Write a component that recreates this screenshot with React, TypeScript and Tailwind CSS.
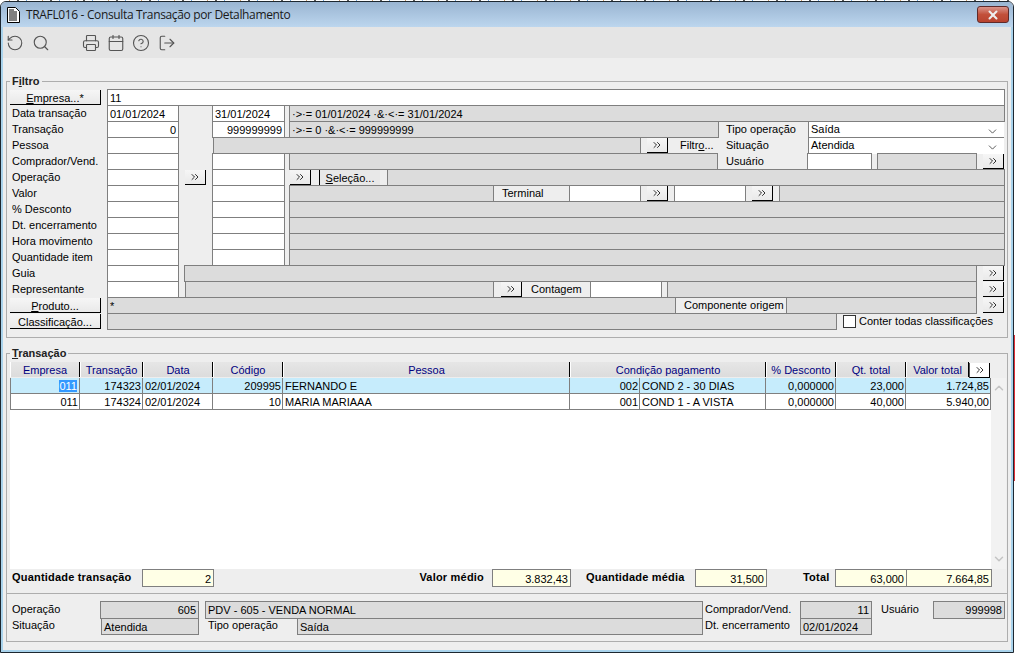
import { ReactNode } from 'react'
import {
  Calendar,
  ChevronDown,
  ChevronsRight,
  ChevronUp,
  CircleHelp,
  LogOut,
  Printer,
  RotateCcw,
  Search,
  X,
} from 'lucide-react'

function Input({
  className = '',
  children,
}: {
  className?: string
  children?: ReactNode
}) {
  return (
    <div
      className={`box-border h-[17px] shrink-0 overflow-hidden border border-[#7f7f7f] bg-white px-[2px] leading-[17px] ${className}`}
    >
      {children}
    </div>
  )
}

function Gray({
  className = '',
  children,
}: {
  className?: string
  children?: ReactNode
}) {
  return (
    <div
      className={`box-border h-[17px] shrink-0 overflow-hidden border border-[#7f7f7f] bg-[#dcdcdc] px-[2px] leading-[17px] ${className}`}
    >
      {children}
    </div>
  )
}

function Btn({
  className = '',
  children,
}: {
  className?: string
  children: ReactNode
}) {
  return (
    <div
      className={`mt-px box-border flex h-[15px] shrink-0 items-center justify-center border-r border-b border-black bg-gradient-to-b from-[#f6f6f6] to-[#e9e9e9] leading-none ${className}`}
    >
      {children}
    </div>
  )
}

function More({ className = '' }: { className?: string }) {
  return (
    <Btn className={`w-[21px] ${className}`}>
      <ChevronsRight size={12} strokeWidth={1.6} className="text-black" />
    </Btn>
  )
}

function Tag({
  className = '',
  children,
}: {
  className?: string
  children: ReactNode
}) {
  return (
    <div className={`h-4 shrink-0 leading-[17px] ${className}`}>{children}</div>
  )
}

function Row({ children }: { children: ReactNode }) {
  return <div className="flex h-4 pl-[3px]">{children}</div>
}

function Select({ value }: { value: string }) {
  return (
    <div className="ml-0 box-border flex h-[17px] w-[196px] shrink-0 items-center justify-between border-t border-l border-[#7f7f7f] bg-white pr-[5px] pl-[2px] leading-[13px]">
      <span className="-mt-[2px]">{value}</span>
      <ChevronDown size={13} strokeWidth={1.6} className="mt-[3px] text-[#444]" />
    </div>
  )
}

function Legend({ children }: { children: ReactNode }) {
  return (
    <div className="-mt-[8px] ml-[3px] h-[15px] w-fit bg-[#eeeeee] px-[2px] leading-[15px] font-bold text-[#222]">
      {children}
    </div>
  )
}

const headers = [
  { label: 'Empresa', width: 'w-[70px]' },
  { label: 'Transação', width: 'w-[63px]' },
  { label: 'Data', width: 'w-[70px]' },
  { label: 'Código', width: 'w-[70px]' },
  { label: 'Pessoa', width: 'w-[287px]' },
  { label: 'Condição pagamento', width: 'w-[196px]' },
  { label: '% Desconto', width: 'w-[70px]' },
  { label: 'Qt. total', width: 'w-[70px]' },
  { label: 'Valor total', width: 'w-[63px]' },
]

const columns = [
  'w-[70px] border-l text-right pr-[1px]',
  'w-[63px] text-right pr-[1px]',
  'w-[70px]',
  'w-[70px] text-right pr-[1px]',
  'w-[287px]',
  'w-[70px] text-right pr-[1px]',
  'w-[126px]',
  'w-[70px] text-right pr-[1px]',
  'w-[70px] text-right pr-[1px]',
  'w-[85px] text-right pr-[1px]',
]

const rows = [
  ['011', '174323', '02/01/2024', '209995', 'FERNANDO E', '002', 'COND 2 - 30 DIAS', '0,000000', '23,000', '1.724,85'],
  ['011', '174324', '02/01/2024', '10', 'MARIA MARIAAA', '001', 'COND 1 - A VISTA', '0,000000', '40,000', '5.940,00'],
]

const plainRows = ['% Desconto', 'Dt. encerramento', 'Hora movimento', 'Quantidade item']

export default function App() {
  return (
    <div className="flex h-[653px] w-[1015px] overflow-hidden bg-white bg-[repeating-linear-gradient(90deg,#ffffff_0_9px,#c89a6a_9px_10px,#ffffff_10px_17px,#555555_17px_19px,#ffffff_19px_26px,#6aa0d8_26px_27px,#ffffff_27px_33px)] bg-[length:100%_1px] bg-no-repeat font-['Liberation_Sans',Arial,sans-serif] text-[11px] text-black">
      <div className="mt-px box-border flex h-[652px] w-[1014px] shrink-0 flex-col overflow-hidden rounded-t-[6px] border border-[#1d2730]">
        <div className="flex h-[25px] shrink-0 items-center bg-gradient-to-b from-[#9ab5d2] to-[#bcd6ee] pr-[4px] pl-[6px]">
          <svg width="13" height="16" viewBox="0 0 13 16" className="shrink-0">
            <path d="M.5.5h8l4 4v11H.5z" fill="#fff" stroke="#000" />
            <path d="M2 3h5M2 5h8M2 7h8M2 9h8M2 11h8M2 13h8" stroke="#000" strokeWidth="1" />
          </svg>
          <span className="ml-[6px] font-['Open_Sans',sans-serif] text-[12px] tracking-[-0.35px] text-[#1a1a1a]">
            TRAFL016 - Consulta Transação por Detalhamento
          </span>
          <div className="ml-auto flex h-[17px] w-[32px] items-center justify-center rounded-[3px] border border-[#5f2a2a] bg-gradient-to-b from-[#d9938a] via-[#c2503a] to-[#b8432f]">
            <X size={14} strokeWidth={3.5} className="text-[#eeeeee]" />
          </div>
        </div>

        <div className="flex min-h-0 flex-1 flex-col border-x-2 border-b-2 border-[#a9d3ec] bg-[#eeeeee]">
          <div className="flex h-[31px] shrink-0 items-center bg-[#e5e5e5] pl-[3px] text-[#555]">
            <RotateCcw size={18} strokeWidth={1.5} />
            <Search size={18} strokeWidth={1.5} className="ml-[8px]" />
            <Printer size={18} strokeWidth={1.5} className="ml-[32px]" />
            <Calendar size={18} strokeWidth={1.5} className="ml-[7px]" />
            <CircleHelp size={18} strokeWidth={1.5} className="ml-[7px]" />
            <LogOut size={18} strokeWidth={1.5} className="ml-[8px]" />
          </div>

          <div className="mx-[3px] mt-[23px] box-border h-[257px] border border-[#adadad]">
            <Legend>
              F<u>i</u>ltro
            </Legend>
            <Row>
              <Btn className="w-[91px] pt-[2px]">
                <span>
                  <u>E</u>mpresa...*
                </span>
              </Btn>
              <Input className="ml-[6px] w-[898px]">11</Input>
            </Row>
            <Row>
              <Tag className="w-[97px] pl-[2px]">Data transação</Tag>
              <Input className="w-[72px]">01/01/2024</Input>
              <Input className="ml-[33px] w-[73px]">31/01/2024</Input>
              <Gray className="ml-[4px] w-[716px]">{'·>·= 01/01/2024 ·&·<·= 31/01/2024'}</Gray>
            </Row>
            <Row>
              <Tag className="w-[97px] pl-[2px]">Transação</Tag>
              <Input className="w-[72px] text-right">0</Input>
              <Input className="ml-[33px] w-[73px] text-right">999999999</Input>
              <Gray className="ml-[4px] w-[430px]">{'·>·= 0 ·&·<·= 999999999'}</Gray>
              <Tag className="ml-[7px] w-[82px]">Tipo operação</Tag>
              <Select value="Saída" />
            </Row>
            <Row>
              <Tag className="w-[97px] pl-[2px]">Pessoa</Tag>
              <Input className="w-[72px]" />
              <Gray className="ml-[34px] w-[428px]" />
              <More className="ml-[6px]" />
              <Tag className="w-[58px] pl-[12px]">
                Filtr<u>o</u>...
              </Tag>
              <Tag className="w-[82px]">Situação</Tag>
              <Select value="Atendida" />
            </Row>
            <Row>
              <Tag className="w-[97px] pl-[2px]">Comprador/Vend.</Tag>
              <Input className="w-[72px]" />
              <Input className="ml-[33px] w-[73px]" />
              <Gray className="ml-[4px] w-[429px]" />
              <Tag className="ml-[8px] w-[81px]">Usuário</Tag>
              <Input className="w-[65px]" />
              <Gray className="ml-[5px] w-[100px]" />
              <More className="ml-[6px]" />
            </Row>
            <Row>
              <Tag className="w-[97px] pl-[2px]">Operação</Tag>
              <Input className="w-[72px]" />
              <More className="ml-[6px]" />
              <Input className="ml-[6px] w-[73px]" />
              <More className="ml-[5px]" />
              <Btn className="ml-[8px] w-[61px] border-r-0 border-b-0 border-l border-[#cfcfcf] bg-none bg-[#e8e8e8] pt-[2px]">
                <span>
                  <u>S</u>eleção...
                </span>
              </Btn>
              <Gray className="ml-[7px] w-[618px]" />
            </Row>
            <Row>
              <Tag className="w-[97px] pl-[2px]">Valor</Tag>
              <Input className="w-[72px]" />
              <Input className="ml-[33px] w-[73px]" />
              <Gray className="ml-[4px] w-[205px]" />
              <Tag className="w-[75px] pl-[8px]">Terminal</Tag>
              <Input className="w-[72px]" />
              <More className="ml-[6px]" />
              <Input className="ml-[6px] w-[72px]" />
              <More className="ml-[6px]" />
              <Gray className="ml-[6px] w-[226px]" />
            </Row>
            {plainRows.map((label) => (
              <Row key={label}>
                <Tag className="w-[97px] pl-[2px]">{label}</Tag>
                <Input className="w-[72px]" />
                <Input className="ml-[33px] w-[73px]" />
                <Gray className="ml-[4px] w-[716px]" />
              </Row>
            ))}
            <Row>
              <Tag className="w-[97px] pl-[2px]">Guia</Tag>
              <Input className="w-[72px]" />
              <Gray className="ml-[5px] w-[793px]" />
              <More className="ml-[6px]" />
            </Row>
            <Row>
              <Tag className="w-[97px] pl-[2px]">Representante</Tag>
              <Input className="w-[72px]" />
              <Gray className="ml-[6px] w-[309px]" />
              <More className="ml-[7px]" />
              <Tag className="w-[68px] pl-[9px]">Contagem</Tag>
              <Input className="w-[72px]" />
              <Gray className="ml-[5px] w-[310px]" />
              <More className="ml-[6px]" />
            </Row>
            <Row>
              <Btn className="w-[91px] pt-[2px]">
                <span>
                  <u>P</u>roduto...
                </span>
              </Btn>
              <Gray className="ml-[6px] w-[569px]">*</Gray>
              <Tag className="w-[110px] pl-[8px]">Componente origem</Tag>
              <Gray className="w-[191px]" />
              <More className="ml-[6px]" />
            </Row>
            <Row>
              <Btn className="w-[91px] pt-[2px]">Classificação...</Btn>
              <Gray className="ml-[6px] w-[730px]" />
              <div className="ml-[6px] mt-[2px] box-border h-[13px] w-[13px] shrink-0 border border-[#333] bg-white" />
              <Tag className="ml-[3px]">Conter todas classificações</Tag>
            </Row>
          </div>

          <div className="mx-[3px] mt-[15px] box-border h-[241px] shrink-0 border border-[#adadad]">
            <Legend>
              <u>T</u>ransação
            </Legend>
            <div className="mt-px flex h-[207px] pl-[3px]">
              <div className="w-[981px] shrink-0 bg-white">
                <div className="flex h-4 bg-[#eeeeee]">
                  {headers.map((h) => (
                    <div
                      key={h.label}
                      className={`box-border h-[15px] shrink-0 border-r border-l border-r-black border-l-white bg-gradient-to-b from-[#e6e6e6] to-[#dcdcdc] text-center leading-[17px] text-[#000080] ${h.width}`}
                    >
                      {h.label}
                    </div>
                  ))}
                  <Btn className="mt-0 w-[21px] border-l border-l-[#555] bg-none bg-white">
                    <ChevronsRight size={12} strokeWidth={1.6} className="text-black" />
                  </Btn>
                </div>
                {rows.map((row, r) => (
                  <div key={row[1]} className={`flex h-4 ${r === 0 ? 'bg-[#c6ecfc]' : 'bg-white'}`}>
                    {row.map((value, c) => (
                      <div
                        key={c}
                        className={`box-border h-4 shrink-0 border-r border-b border-[#7f7f7f] pl-[2px] leading-[17px] ${columns[c]}`}
                      >
                        {r === 0 && c === 0 ? (
                          <span className="mr-px bg-[#3399ff] text-white">{value}</span>
                        ) : (
                          value
                        )}
                      </div>
                    ))}
                  </div>
                ))}
              </div>
              <div className="mt-4 flex w-[15px] shrink-0 flex-col items-center justify-between bg-[#f2f2f2] py-[3px] text-[#c4c4c4]">
                <ChevronUp size={14} strokeWidth={2.5} />
                <ChevronDown size={14} strokeWidth={2.5} />
              </div>
            </div>
            <div className="flex h-[18px] pl-[3px] leading-4 font-bold tracking-[0.2px]">
              <div className="w-[132px] shrink-0 pl-[2px]">Quantidade transação</div>
              <div className="box-border h-[18px] w-[72px] shrink-0 border border-[#7f7f7f] bg-[#ffffe6] pt-px pr-[2px] text-right font-normal tracking-normal">
                2
              </div>
              <div className="w-[278px] shrink-0 pr-[8px] text-right">Valor médio</div>
              <div className="box-border h-[18px] w-[79px] shrink-0 border border-[#7f7f7f] bg-[#ffffe6] pt-px pr-[2px] text-right font-normal tracking-normal">
                3.832,43
              </div>
              <div className="ml-[15px] w-[109px] shrink-0">Quantidade média</div>
              <div className="box-border h-[18px] w-[72px] shrink-0 border border-[#7f7f7f] bg-[#ffffe6] pt-px pr-[2px] text-right font-normal tracking-normal">
                31,500
              </div>
              <div className="w-[68px] shrink-0 pl-[36px]">Total</div>
              <div className="box-border h-[18px] w-[72px] shrink-0 border border-[#7f7f7f] bg-[#ffffe6] pt-px pr-[2px] text-right font-normal tracking-normal">
                63,000
              </div>
              <div className="-ml-px box-border h-[18px] w-[86px] shrink-0 border border-[#7f7f7f] bg-[#ffffe6] pt-px pr-[2px] text-right font-normal tracking-normal">
                7.664,85
              </div>
            </div>
          </div>

          <div className="mx-[3px] box-border h-[48px] shrink-0 border border-t-0 border-[#adadad] pt-[7px]">
            <div className="flex h-[17px]">
              <Tag className="w-[93px] pl-[5px]">Operação</Tag>
              <Gray className="h-[18px] w-[99px] text-right">605</Gray>
              <Gray className="ml-[6px] h-[18px] w-[498px]">PDV - 605 - VENDA NORMAL</Gray>
              <Tag className="w-[97px] pl-[2px]">Comprador/Vend.</Tag>
              <Gray className="h-[18px] w-[72px] text-right">11</Gray>
              <Tag className="w-[61px] pl-[9px]">Usuário</Tag>
              <Gray className="h-[18px] w-[72px] text-right">999998</Gray>
            </div>
            <div className="flex h-[17px]">
              <Tag className="-mt-px w-[94px] pl-[5px]">Situação</Tag>
              <Gray>
                <span className="block w-[92px]">Atendida</span>
              </Gray>
              <Tag className="-mt-px w-[98px] pl-[9px]">Tipo operação</Tag>
              <Gray className="w-[406px]">Saída</Gray>
              <Tag className="-mt-px w-[97px] pl-[2px]">Dt. encerramento</Tag>
              <Gray className="w-[72px]">02/01/2024</Gray>
            </div>
          </div>
        </div>
      </div>
      <div className="w-px shrink-0">
        <div className="mt-[335px] h-[146px] bg-[#e0303a]" />
      </div>
    </div>
  )
}
